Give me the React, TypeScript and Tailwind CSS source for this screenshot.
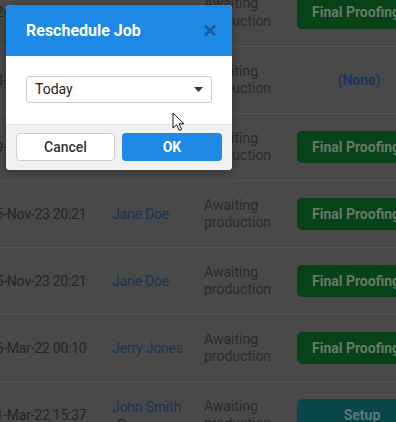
import React from 'react';

type Row = {
  date: string;
  name?: string;
  note?: boolean;
  stage: 'proof' | 'none' | 'setup';
};

const rows: Row[] = [
  { date: '12-Dec-23 09:14', name: 'Jane Doe', stage: 'proof' },
  { date: '13-Dec-23 11:02', name: 'Jane Doe', stage: 'none' },
  { date: '29-Nov-23 16:45', name: 'Jane Doe', stage: 'proof' },
  { date: '15-Nov-23 20:21', name: 'Jane Doe', stage: 'proof' },
  { date: '15-Nov-23 20:21', name: 'Jane Doe', stage: 'proof' },
  { date: '25-Mar-22 00:10', name: 'Jerry Jones', stage: 'proof' },
  { date: '21-Mar-22 15:37', name: 'John Smith', note: true, stage: 'setup' },
];

const Stage = ({ stage }: { stage: Row['stage'] }) => {
  if (stage === 'none') {
    return <div className="text-center font-bold text-[#17385a] pr-[6px]">(None)</div>;
  }
  if (stage === 'setup') {
    return (
      <div className="h-[32px] rounded-[5px] bg-[#0a4748] text-[#5a7878] font-bold flex items-center justify-center">
        Setup
      </div>
    );
  }
  return (
    <div className="h-[32px] rounded-[5px] bg-[#074218] text-[#667a6a] font-bold flex items-center pl-[15px] whitespace-nowrap">
      Final Proofing
    </div>
  );
};

const JobRow = ({ row, first }: { row: Row; first?: boolean }) => (
  <div
    className={`grid grid-cols-[127px_92px_93px_130px] h-[67px] items-center ${
      first ? '' : 'border-t border-[#545454]'
    }`}
  >
    <div className="text-[#262626] whitespace-nowrap pl-[3px] tracking-[-0.25px]">{row.date}</div>
    <div className="flex flex-col text-[#183652] tracking-[-0.2px]">
      <span className="leading-[18px]">{row.name}</span>
      {row.note && (
        <svg width="12" height="14" viewBox="0 0 12 14" className="ml-[4px] mt-[2px]" fill="none" stroke="#2a2a2a" strokeWidth="1.3">
          <path d="M3 1.5h4.5L10 4v8.5H3z" />
          <path d="M1.5 3.5v9.5h6.5" />
        </svg>
      )}
    </div>
    <div className="text-[#2b2b2b] leading-[17.5px]">
      Awaiting
      <br />
      production
    </div>
    <Stage stage={row.stage} />
  </div>
);

const Cursor = () => (
  <svg width="13" height="20" viewBox="0 0 13 20" className="absolute left-[172px] top-[112px]">
    <path d="M1 1v15l3.6-3.4 2.6 5.8 2.4-1-2.5-5.6H12z" fill="#fff" stroke="#111" strokeWidth="1" strokeLinejoin="round" />
  </svg>
);

export default function App() {
  return (
    <div className="relative w-[396px] h-[422px] overflow-hidden bg-[#494949] font-['Roboto',sans-serif] text-[14px]">
      <div className="-mt-[21px] -ml-[15px]">
        {rows.map((r, i) => (
          <JobRow key={i} row={r} first={i === 0} />
        ))}
      </div>

      <div className="absolute left-[6px] top-[5px] w-[226px] rounded-[4px] bg-white shadow-[0_2px_10px_rgba(0,0,0,0.35)]">
        <div className="h-[51px] rounded-t-[4px] bg-[#1e88e5] flex items-center justify-between pl-[20px] pr-[16px]">
          <span className="text-white font-bold text-[16px]">Reschedule Job</span>
          <svg width="12" height="11" viewBox="0 0 12 11">
            <path d="M2 1.5l8 8M10 1.5l-8 8" stroke="#1b5c9c" strokeWidth="3" strokeLinecap="round" />
          </svg>
        </div>
        <div className="h-[68px] px-[20px] pt-[20px]">
          <div className="h-[27px] w-[186px] border border-[#cacaca] rounded-[3px] flex items-center justify-between pl-[8px] pr-[8px] text-[#222]">
            <span>Today</span>
            <svg width="9" height="5" viewBox="0 0 9 5">
              <path d="M0 0h9L4.5 5z" fill="#333" />
            </svg>
          </div>
        </div>
        <div className="h-[46px] rounded-b-[4px] bg-[#f0f1f3] border-t border-[#e4e4e4] flex gap-[7px] px-[10px] pt-[8px]">
          <button className="h-[28px] w-[99px] rounded-[4px] bg-white border border-[#cfcfcf] text-[#333] font-medium">
            Cancel
          </button>
          <button className="h-[28px] w-[100px] rounded-[4px] bg-[#1e88e5] text-white font-bold">
            OK
          </button>
        </div>
      </div>

      <Cursor />
    </div>
  );
}
